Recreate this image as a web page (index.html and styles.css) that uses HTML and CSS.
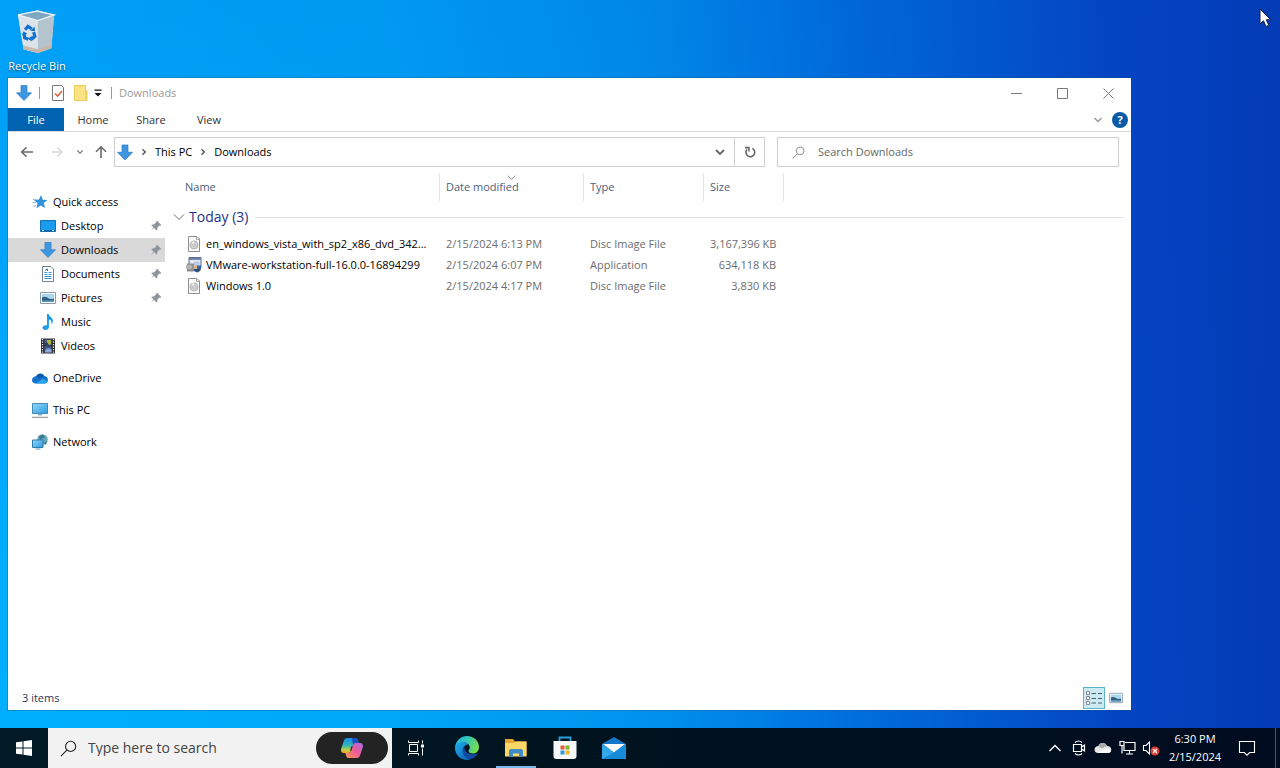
FILE: index.html
```
<!DOCTYPE html>
<html lang="en">
<head>
  <meta charset="UTF-8">
  <meta name="viewport" content="width=device-width, initial-scale=1.0">
  <title>Downloads</title>
  <link rel="stylesheet" href="styles.css">
</head>
<body>

  <!-- Shared icons -->
  <svg class="sprite" aria-hidden="true">
    <defs>
      <linearGradient id="screen" x1="0" y1="0" x2="1" y2="1">
        <stop offset="0" stop-color="#8fd9fa"/><stop offset="1" stop-color="#2f9be0"/>
      </linearGradient>
    </defs>
    <symbol id="i-down" viewBox="0 0 16 16">
      <path d="M5 .5h6v7.300h4.500L8 15.500.5 7.800H5z" fill="#3d97e0" stroke="#2a7cc4" stroke-width=".7"/>
    </symbol>
    <symbol id="i-pin" viewBox="0 0 12 12">
      <path d="M7 .7 11.300 5l-1 .8-.8-.2-2.300 2.300.1 1.800-.9.8L4 8.100.7 11.300 3.500 7.500 1.300 5.300l.9-.9 1.800.2 2.300-2.300-.2-.8z" fill="#8c959e"/>
    </symbol>
    <symbol id="i-chev" viewBox="0 0 10 10">
      <path d="M1.500 3 5 6.500 8.500 3" fill="none" stroke="currentColor" stroke-width="1.500"/>
    </symbol>
    <symbol id="i-chev-thin" viewBox="0 0 12 12">
      <path d="M1 3.500 6 8.500l5-5" fill="none" stroke="currentColor" stroke-width="1"/>
    </symbol>
    <symbol id="i-crumb" viewBox="0 0 8 10">
      <path d="M2.500 2.200 5.300 5 2.500 7.800" fill="none" stroke="currentColor" stroke-width="1.400"/>
    </symbol>
    <symbol id="i-search" viewBox="0 0 16 16">
      <circle cx="10" cy="6" r="4.800" fill="none" stroke="currentColor"/>
      <path d="M6.500 9.500.8 15.200" stroke="currentColor"/>
    </symbol>
    <symbol id="i-disc" viewBox="0 0 16 16">
      <path d="M2.500.5h8.500l2.500 2.500v12.500h-11z" fill="#fbfbfb" stroke="#8d8d8d"/>
      <path d="M10.500.5v3h3" fill="none" stroke="#a5a5a5"/>
      <circle cx="8" cy="9" r="4" fill="#d2d2d2" stroke="#a8a8a8" stroke-width=".8"/>
      <path d="M8 9 5.500 6.200A4 4 0 0 1 8 5.200z" fill="#f5f5f5"/>
      <circle cx="8" cy="9" r="1.200" fill="#fff" stroke="#999" stroke-width=".6"/>
    </symbol>
    <symbol id="i-picture" viewBox="0 0 16 14">
      <path d="M.5 1.500h15v11H.5z" fill="#fff" stroke="#8b9bab"/>
      <path d="M2 3h12v8H2z" fill="#a9d7f2"/>
      <path d="M2 6.500c3-1.500 5 0 7 1s3 .5 5 0V11H2z" fill="#33607f"/>
      <path d="M2 9.500h12V11H2z" fill="#5d9ac4"/>
    </symbol>
  </svg>

  <!-- Desktop -->
  <main class="desktop">
    <a class="desktop-icon" href="#">
      <svg width="40" height="48" viewBox="0 0 42 50">
        <path d="M1 5 22 0l17 5-3 35-14 5-15-4z" fill="#c9d4dc"/>
        <path d="M1 5l21 6v34L7 41z" fill="#dce4e9"/>
        <path d="M22 11l17-6-3 35-14 5z" fill="#b4c3ce"/>
        <path d="M1 5 21 1l18 4-17 6z" fill="#7fa7c2" stroke="#eef4f7" stroke-width="1.400"/>
        <path d="M6.500 37 22 41l14.300-5-.3 4-14 5-15-4z" fill="#c8b8aa"/>
        <g fill="none" stroke="#1273cf" stroke-width="3.400">
          <path d="M8.500 20.500 11.500 17l4 2.500"/>
          <path d="M17.500 23l1.200 4.500-3.500 3"/>
          <path d="M12 30.500l-4-1.500-.5-4.500"/>
        </g>
        <path d="M14 21.500l5 .5-.5-5zM15.500 27v6l-4-3zM5 26l2-4 4 3z" fill="#1273cf"/>
      </svg>
      <span>Recycle Bin</span>
    </a>

    <!-- Explorer window -->
    <section class="window">
      <header class="titlebar">
        <svg width="16" height="16"><use href="#i-down"/></svg>
        <span class="divider"></span>
        <button class="quick" aria-label="Properties">
          <svg width="14" height="16" viewBox="0 0 14 16"><path d="M1.500.5h9l2 2v13h-11z" fill="#fff" stroke="#777"/><path d="M4 8.500 6.500 11l4.500-5" fill="none" stroke="#d9603b" stroke-width="1.600"/></svg>
        </button>
        <button class="quick" aria-label="New folder">
          <svg width="14" height="16" viewBox="0 0 14 16"><path d="M.5.5h11v5h1.500v10H.5z" fill="#fbe283" stroke="#edcb5c"/><path d="M11 15.500v-10h2v10z" fill="#f2cf61"/></svg>
        </button>
        <button class="quick quick-more" aria-label="Customize Quick Access Toolbar">
          <svg width="8" height="8" viewBox="0 0 8 8"><path d="M.5.500h7v1.300h-7zM.5 4h7L4 7.500z" fill="#111"/></svg>
        </button>
        <span class="divider"></span>
        <h1>Downloads</h1>
        <div class="controls">
          <button aria-label="Minimize"><svg width="11" height="11" viewBox="0 0 11 11"><path d="M0 5.500h11" stroke="#777"/></svg></button>
          <button aria-label="Maximize"><svg width="11" height="11" viewBox="0 0 11 11"><path d="M.5.5h10v10H.5z" fill="none" stroke="#777"/></svg></button>
          <button aria-label="Close"><svg width="11" height="11" viewBox="0 0 11 11"><path d="M.5.5l10 10M10.500.5l-10 10" stroke="#777"/></svg></button>
        </div>
      </header>

      <nav class="tabs">
        <button class="file-tab">File</button>
        <button>Home</button>
        <button>Share</button>
        <button>View</button>
        <button class="ribbon-toggle" aria-label="Expand the Ribbon"><svg width="10" height="10"><use href="#i-chev"/></svg></button>
        <button class="help" aria-label="Help">?</button>
      </nav>

      <div class="toolbar">
        <div class="history">
          <button aria-label="Back"><svg width="14" height="14" viewBox="0 0 14 14"><path d="M13 7H2M6.500 2.200 1.700 7l4.800 4.800" fill="none" stroke="#6a6a6a" stroke-width="1.600"/></svg></button>
          <button aria-label="Forward"><svg width="14" height="14" viewBox="0 0 14 14"><path d="M2 7h10M7.500 2.500 12 7l-4.500 4.500" fill="none" stroke="#d5d5d5" stroke-width="1.400"/></svg></button>
          <button class="recent" aria-label="Recent locations"><svg width="8" height="8"><use href="#i-chev"/></svg></button>
          <button aria-label="Up"><svg width="14" height="14" viewBox="0 0 14 14"><path d="M7 13V2M2 6.700 7 1.800l5 4.900" fill="none" stroke="#6a6a6a" stroke-width="1.600"/></svg></button>
        </div>
        <div class="address">
          <svg width="16" height="17"><use href="#i-down"/></svg>
          <svg class="sep" width="8" height="10"><use href="#i-crumb"/></svg>
          <a href="#">This PC</a>
          <svg class="sep" width="8" height="10"><use href="#i-crumb"/></svg>
          <a href="#">Downloads</a>
          <button class="previous" aria-label="Previous locations"><svg width="12" height="12" viewBox="0 0 12 12"><path d="M2 4l4 4 4-4" fill="none" stroke="#666" stroke-width="1.800"/></svg></button>
          <button class="refresh" aria-label="Refresh"><svg width="12" height="12" viewBox="0 0 12 12"><path d="M8.300 2.400A4.400 4.400 0 1 1 3 3.500" fill="none" stroke="#666" stroke-width="1.600"/><path d="M1 .8h4.700v4.700H4.200V2.400H1z" fill="#666"/></svg></button>
        </div>
        <label class="search">
          <svg width="13" height="13"><use href="#i-search" /></svg>
          <input type="text" placeholder="Search Downloads" aria-label="Search Downloads">
        </label>
      </div>

      <div class="explorer">
        <nav class="tree">
          <a href="#">
            <svg width="16" height="16" viewBox="0 0 16 16"><path d="M9 1l1.800 4.700 4.700.2-3.700 3.200 1.300 5L8.700 11.500 4.500 14.200l1-4.900L2 6l4.900-.4z" fill="#2f93dd"/><path d="M1 5.500h3M.5 8.500h3.500M1 12h3" stroke="#7dbcec" stroke-width="1"/></svg>
            Quick access
          </a>
          <a href="#" class="child">
            <svg width="16" height="16" viewBox="0 0 16 16"><path d="M.5 2.500h15v11H.5z" fill="#1a9bf0" stroke="#1470b5"/><path d="M1 12.500h14" stroke="#0d5f9e"/><path d="M2 12.500h2M12 12.500h2" stroke="#cde9fb"/></svg>
            Desktop
            <svg class="pin" width="12" height="12"><use href="#i-pin"/></svg>
          </a>
          <a href="#" class="child selected">
            <svg width="16" height="16"><use href="#i-down"/></svg>
            Downloads
            <svg class="pin" width="12" height="12"><use href="#i-pin"/></svg>
          </a>
          <a href="#" class="child">
            <svg width="16" height="16" viewBox="0 0 16 16"><path d="M2.500.5h8.500l2.500 2.500v12.500h-11z" fill="#fff" stroke="#758493"/><path d="M4.500 6.500h3M4.500 8.500h3M4.500 10.500h7M4.500 12.500h7M8.500 6.500h3M8.500 8.500h3" stroke="#3f94cf"/><path d="M5 4.500 7.500 3M7.500 5V3" stroke="#2d76ad"/></svg>
            Documents
            <svg class="pin" width="12" height="12"><use href="#i-pin"/></svg>
          </a>
          <a href="#" class="child">
            <svg width="16" height="14"><use href="#i-picture"/></svg>
            Pictures
            <svg class="pin" width="12" height="12"><use href="#i-pin"/></svg>
          </a>
          <a href="#" class="child">
            <svg width="16" height="16" viewBox="0 0 16 16"><path d="M7 0h1.700c.3 2.600 4.300 3.400 4.200 7 0 1.500-.7 2.800-1.400 3.500.5-3-.8-4.500-2.600-5V13c0 1.800-1.600 3-3.400 3S2.500 15 2.500 13.600c0-1.700 2.200-2.900 4.500-2.300z" fill="#1e9be3"/></svg>
            Music
          </a>
          <a href="#" class="child">
            <svg width="16" height="16" viewBox="0 0 16 16"><path d="M1 .5h14v15H1z" fill="#2b2b2b"/><path d="M2.500 1v14M13.500 1v14" stroke="#eee" stroke-width="1.300" stroke-dasharray="1.300 1.200"/><path d="M4.500 1.500h7v6h-7zM4.500 8.500h7v6h-7z" fill="#46609e"/><path d="M7 2h4v4l-2 1-2-2z" fill="#a8b83c"/><path d="M4.500 5.500 7 4l2 3.500H4.500z" fill="#304254"/><path d="M5 13c2-3 4-3 6.500-1.500v3H5z" fill="#8aa7dc"/></svg>
            Videos
          </a>
          <a href="#" class="root">
            <svg width="16" height="16" viewBox="0 0 16 16"><path d="M4 6.200A4.500 4.500 0 0 1 12 6c2.300 0 3.900 1.700 3.900 3.800S14.500 13.500 12.500 13.500H3.700C1.500 13.500 0 12 0 10s1.800-3.800 4-3.800z" fill="#1673c9"/><path d="M4.500 6C5.500 3 10.500 2.500 12 6L7 9z" fill="#0b5cb0"/><path d="M3.500 13.500 11 8.800l4.500 2.700c-.6 1.200-1.800 2-3 2z" fill="#2ba7ed"/></svg>
            OneDrive
          </a>
          <a href="#" class="root">
            <svg width="16" height="16" viewBox="0 0 16 16"><path d="M.5 1.500h15v10H.5z" fill="url(#screen)" stroke="#4488b4"/><path d="M6 12h4v1.500H6z" fill="#7eb3d4"/><path d="M0 15.300h16" stroke="#8b8791"/></svg>
            This PC
          </a>
          <a href="#" class="root">
            <svg width="16" height="16" viewBox="0 0 16 16"><circle cx="10.500" cy="5.500" r="5.300" fill="#65a9bd"/><path d="M7 2l4-1.500 2 3-3 1-2 3zM12 9l3-2-1 4z" fill="#397b92"/><path d="M.5 6h10.500v7.500H.5z" fill="url(#screen)" stroke="#317ba9"/><path d="M3.500 15h5" stroke="#6d9fbd"/></svg>
            Network
          </a>
        </nav>

        <div class="files">
          <table>
            <colgroup>
              <col class="col-name"><col class="col-date"><col class="col-type"><col class="col-size"><col>
            </colgroup>
            <thead>
              <tr>
                <th>Name</th>
                <th>Date modified<svg class="sort" width="9" height="9"><use href="#i-chev-thin"/></svg></th>
                <th>Type</th>
                <th>Size</th>
                <td></td>
              </tr>
            </thead>
            <tbody>
              <tr class="group">
                <td colspan="5"><div><svg width="12" height="12"><use href="#i-chev-thin"/></svg><span>Today (3)</span></div></td>
              </tr>
              <tr>
                <td><div class="file"><svg width="16" height="16"><use href="#i-disc"/></svg><span>en_windows_vista_with_sp2_x86_dvd_342...</span></div></td>
                <td>2/15/2024 6:13 PM</td>
                <td>Disc Image File</td>
                <td>3,167,396 KB</td>
                <td></td>
              </tr>
              <tr>
                <td><div class="file"><svg width="16" height="16" viewBox="0 0 16 16"><path d="M3 .5h12v10H3z" fill="#e4e9f2" stroke="#5c6b86"/><path d="M3 1h12v2H3z" fill="#6f83ab"/><path d="M8 4.500h5.500v5H8z" fill="#b9c9e3"/><path d="M1 6.500h7v8H1z" fill="#8f8f8f"/><circle cx="3.500" cy="10" r="3" fill="#b7b7b7" stroke="#777" stroke-width=".6"/><path d="M7.500 8.500h3.500V12H7.500z" fill="#d9b482"/><path d="M11 8.500h4V12h-4z" fill="#3466aa"/><path d="M7.500 12H11v3.500L8 14z" fill="#2b4f8d"/><path d="M11 12h4c-.5 2-2 3-4 3.500z" fill="#394a63"/></svg><span>VMware-workstation-full-16.0.0-16894299</span></div></td>
                <td>2/15/2024 6:07 PM</td>
                <td>Application</td>
                <td>634,118 KB</td>
                <td></td>
              </tr>
              <tr>
                <td><div class="file"><svg width="16" height="16"><use href="#i-disc"/></svg><span>Windows 1.0</span></div></td>
                <td>2/15/2024 4:17 PM</td>
                <td>Disc Image File</td>
                <td>3,830 KB</td>
                <td></td>
              </tr>
            </tbody>
          </table>
        </div>
      </div>

      <footer class="status">
        <span>3 items</span>
        <button class="active" aria-label="Details view">
          <svg width="16" height="14" viewBox="0 0 16 14"><path d="M.5.5h3v3h-3zM.5 5.500h3v3h-3zM.5 10.500h3v3h-3z" fill="#fff" stroke="#8d8494"/><path d="M5.500 2.500H10M12 2.500h4M5.500 7.500H10M12 7.500h4M5.500 12H10M12 12h4" stroke="#44616e"/></svg>
        </button>
        <button aria-label="Large icons view"><svg width="14" height="12"><use href="#i-picture"/></svg></button>
      </footer>
    </section>

    <svg class="cursor" width="14" height="20" viewBox="0 0 14 20"><path d="M2 1v15l3.500-3.200L8 18.500l2.800-1.200-2.500-5.500h4.500z" fill="#fff" stroke="#10204a"/></svg>
  </main>

  <!-- Taskbar -->
  <footer class="taskbar">
    <button class="start" aria-label="Start">
      <svg width="16" height="16" viewBox="0 0 16 16"><path d="M0 2.300 6.500 1.400v6.100H0zM7.500 1.200 16 0v7.500H7.500zM0 8.500h6.500v6.100L0 13.700zM7.500 8.500H16V16l-8.500-1.200z" fill="#fff"/></svg>
    </button>
    <div class="task-search">
      <label>
        <svg width="17" height="17"><use href="#i-search"/></svg>
        <input type="text" placeholder="Type here to search" aria-label="Type here to search">
      </label>
      <button class="copilot" aria-label="Copilot">
        <svg width="24" height="22" viewBox="0 0 24 22">
          <defs>
            <linearGradient id="cpA" x1="0" y1="0" x2="0" y2="1"><stop offset="0" stop-color="#168de8"/><stop offset=".5" stop-color="#35b6b5"/><stop offset=".8" stop-color="#c2cf3c"/><stop offset="1" stop-color="#f2a633"/></linearGradient>
            <linearGradient id="cpB" x1="1" y1="0" x2="0" y2="1"><stop offset="0" stop-color="#a66be6"/><stop offset=".5" stop-color="#ee5c94"/><stop offset="1" stop-color="#ff9951"/></linearGradient>
          </defs>
          <path d="M7 1h8.500c1.500 0 2 1 2.500 2.500l.7 2.500h-3c-1.500 0-2.300.8-2.700 2l-2 6c-.5 1.300-1.300 2-2.500 2H4c-2.500 0-3.500-2-2.800-4.500L3.800 4C4.400 2.200 5.500 1 7 1z" fill="url(#cpA)"/>
          <path d="M12 1h3.500c1.500 0 2 1 2.500 2.500l.7 2.500h-3c-1.500 0-2.300.8-2.700 2z" fill="#1b50c5"/>
          <path d="M17 21H8.500C7 21 6.500 20 6 18.500L5.300 16h3c1.500 0 2.300-.8 2.700-2l2-6c.5-1.300 1.300-2 2.500-2H20c2.500 0 3.500 2 2.800 4.500L20.200 18c-.6 1.800-1.700 3-3.200 3z" fill="url(#cpB)"/>
          <path d="M11.300 9.500h1.200l-1.300 4.200H10z" fill="#232323"/>
        </svg>
      </button>
    </div>
    <button class="task-view" aria-label="Task View">
      <svg width="18" height="16" viewBox="0 0 18 16"><path d="M2.500 4.500h8v7h-8zM1.500.5v2h10v-2M1.500 15.500v-2h10v2M15.500.5v3M15.500 8.500v7" fill="none" stroke="#fff"/><path d="M14 4.500h3v3h-3z" fill="#fff"/></svg>
    </button>
    <div class="apps">
      <button aria-label="Microsoft Edge">
        <svg width="24" height="24" viewBox="0 0 24 24">
          <defs>
            <linearGradient id="edA" x1="0" y1="0" x2="1" y2=".3"><stop offset="0" stop-color="#29b3e8"/><stop offset=".5" stop-color="#32c6b9"/><stop offset="1" stop-color="#73db55"/></linearGradient>
            <linearGradient id="edB" x1="0" y1="0" x2="1" y2="1"><stop offset="0" stop-color="#1db1ec"/><stop offset="1" stop-color="#0a5ab1"/></linearGradient>
          </defs>
          <path d="M0 11C1 4.500 6 0 12 0c7 0 12 5 12 11 0 4-2.500 6.500-6 6.500-3 0-4.500-1.200-4.500-2.400 0-.9 1.300-1.400 1.300-3.600C14.800 8.500 12 6.500 8.500 6.500 4.500 6.500 1.500 8.500 0 11z" fill="url(#edA)"/>
          <path d="M0 12c0-3.500 4-6 8-6 2.500 0 4.500 1 5.500 2.500-3.500 0-5.500 2.700-5.500 6 0 4.500 4 7.700 8 8.500-1.200.7-2.700 1-4 1C5.400 24 0 18.800 0 12z" fill="url(#edB)"/>
          <path d="M9.300 10.500C7 12.500 7.200 16 8.500 18.500c2 3.700 6 5 8.500 4.200 2.500-1 4.500-3 5.500-4.700.3-.6 0-.8-.6-.6-3.900 1.800-8.500.6-10.900-1.900-1.300-1.400-1.900-3.300-1.700-5z" fill="#1249a0"/>
        </svg>
      </button>
      <button class="running" aria-label="File Explorer">
        <svg width="22" height="18" viewBox="0 0 22 18"><path d="M0 0h8l2 2.500h11.500V17H0z" fill="#e5a52e"/><path d="M0 4h8.500l2-1.500h11V17.500H0z" fill="#ffd767"/><path d="M4 18v-6.500L5.500 10h11l1.500 1.500V18h-4v-3.500H8V18z" fill="#3f8bc8"/></svg>
      </button>
      <button aria-label="Microsoft Store">
        <svg width="24" height="24" viewBox="0 0 24 24"><path d="M6.500 6V1.500h11V6" fill="none" stroke="#29a2dc" stroke-width="1.800"/><path d="M.5 5h23v15c0 2-1 3-3 3h-17c-2 0-3-1-3-3z" fill="#f5f7f8"/><path d="M7.500 9.500h4v4h-4z" fill="#ef5931"/><path d="M12.500 9.500h4v4h-4z" fill="#80b829"/><path d="M7.500 14.500h4v4h-4z" fill="#2a9be0"/><path d="M12.500 14.500h4v4h-4z" fill="#f5b526"/></svg>
      </button>
      <button aria-label="Mail">
        <svg width="24" height="22" viewBox="0 0 24 22"><path d="M0 7 12 0l12 7v15H0z" fill="#1476c7"/><path d="M1 7h22L12 15.500z" fill="#fff"/><path d="M0 7l12 8.500L24 7v15H0z" fill="#33a9e9"/><path d="M0 22l12-6.500L24 7v15z" fill="#168bd9"/></svg>
      </button>
    </div>
    <div class="tray">
      <button aria-label="Show hidden icons"><svg width="14" height="14" viewBox="0 0 14 14"><path d="M1.500 10 7 4.500l5.500 5.500" fill="none" stroke="#fff" stroke-width="1.300"/></svg></button>
      <button aria-label="Meet Now"><svg width="14" height="16" viewBox="0 0 14 16"><path d="M1.500 4.500h8v7h-8zM9.500 7 12.500 5v6L9.500 9M3 2.500Q6.500-.5 10 2.500M3 13.500q3.500 3 7 0" fill="none" stroke="#fff" stroke-width="1.200"/></svg></button>
      <button aria-label="OneDrive"><svg width="18" height="14" viewBox="0 0 18 14"><path d="M4.500 5C5.500 1 11.500 1 13 5c2.700 0 4.300 1.600 4.300 3.800S15.500 12 14 12H4C2 12 .5 10.500.5 8.500S2.500 5 4.500 5z" fill="#e8e8e8"/><path d="M4.500 5C5.500 1 11.500 1 13 5L7.500 7.500z" fill="#acacac"/><path d="M4 12l8-5 5 3c-.6 1.300-1.600 2-3 2z" fill="#fff"/></svg></button>
      <button aria-label="Network"><svg width="17" height="16" viewBox="0 0 17 16"><path d="M6 2.500h10v8H5V6M10.500 10.500v3M7 14h7M1 1.500h4v4H1zM3 5.500v8" fill="none" stroke="#fff" stroke-width="1.200"/></svg></button>
      <button aria-label="Volume"><svg width="18" height="16" viewBox="0 0 18 16"><path d="M1.500 5.500H4L7.500 2v12L4 10.500H1.500z" fill="none" stroke="#fff" stroke-width="1.100"/><circle cx="13" cy="11" r="4.500" fill="#dc3c35"/><path d="M11 9l4 4M15 9l-4 4" stroke="#fff" stroke-width="1.200"/></svg></button>
      <button class="clock"><span>6:30 PM</span><span>2/15/2024</span></button>
      <button class="notifications" aria-label="Notifications"><svg width="18" height="18" viewBox="0 0 18 18"><path d="M1.500 2.500h15v11h-4.800L9 16.200l-2.700-2.700H1.500z" fill="none" stroke="#fff" stroke-width="1.100"/></svg></button>
      <button class="show-desktop" aria-label="Show desktop"></button>
    </div>
  </footer>

</body>
</html>
```

FILE: styles.css
```
* {
  box-sizing: border-box;
}

/* General Page Styling */
body {
  display: flex;
  flex-direction: column;
  min-height: 100vh;
  margin: 0;
  font-family: "Open Sans", "Noto Sans", sans-serif;
  font-size: 11px;
  line-height: 16px;
  color: #000;
  background:
    linear-gradient(to top, rgba(0, 60, 190, 0), rgba(0, 60, 190, 0.14)),
    linear-gradient(90deg, #00b0ff 0%, #00aafa 28%, #0094ee 50%, #006cdc 68%, #0444c2 88%, #033cb4 100%);
}

button,
input {
  padding: 0;
  border: none;
  background: none;
  font: inherit;
  color: inherit;
}

button {
  display: flex;
  align-items: center;
  justify-content: center;
}

a {
  color: inherit;
  text-decoration: none;
}

svg {
  flex: none;
  display: block;
}

.sprite {
  position: absolute;
  width: 0;
  height: 0;
}

/* Desktop */
.desktop {
  position: relative;
  flex: 1;
}

.desktop-icon {
  display: flex;
  flex-direction: column;
  align-items: center;
  width: 74px;
  padding-top: 10px;
  color: #fff;
  text-shadow: 0 1px 2px rgba(0, 0, 0, 0.6);
  white-space: nowrap;
}

.cursor {
  position: absolute;
  top: 8px;
  right: 8px;
}

/* Explorer Window */
.window {
  position: absolute;
  top: 78px;
  right: 149px;
  bottom: 18px;
  left: 8px;
  display: flex;
  flex-direction: column;
  background: #fff;
  box-shadow: 0 0 0 1px rgba(20, 80, 130, 0.35);
}

.titlebar {
  display: flex;
  align-items: center;
  height: 30px;
  padding-left: 8px;
}

.titlebar h1 {
  margin: 0 0 0 7px;
  font-size: 11px;
  font-weight: normal;
  color: #999;
}

.divider {
  width: 1px;
  height: 12px;
  margin-left: 7px;
  background: #999;
}

.quick {
  width: 23px;
}

.divider + .quick {
  margin-left: 6px;
}

.quick-more {
  width: 12px;
}

.controls {
  display: flex;
  align-self: stretch;
  margin-left: auto;
}

.controls button {
  width: 46px;
}

/* Ribbon Tabs */
.tabs {
  display: flex;
  height: 24px;
  border-bottom: 1px solid #dadbdc;
}

.tabs button {
  width: 58px;
  color: #333;
}

.tabs .file-tab {
  width: 56px;
  background: #0063b1;
  color: #fff;
}

.tabs .ribbon-toggle {
  width: 24px;
  margin-left: auto;
  color: #999;
}

.tabs .help {
  align-self: center;
  width: 16px;
  height: 16px;
  margin: 0 3px 0 2px;
  border-radius: 50%;
  background: #0a5ba6;
  color: #fff;
  font-weight: bold;
}

/* Address Bar */
.toolbar {
  display: flex;
  padding: 5px 12px 6px 8px;
}

.history {
  display: flex;
  gap: 8px;
  width: 98px;
  padding-left: 4px;
  color: #777;
}

.history .recent {
  width: 8px;
  margin-right: 2px;
}

.history button:nth-child(2) {
  margin: 0 4px 0 8px;
}

.address,
.search {
  display: flex;
  align-items: center;
  height: 30px;
  border: 1px solid #d0d0d0;
}

.address {
  flex: 1;
  gap: 7px;
  padding-left: 2px;
}

.address .sep {
  color: #555;
}

.address .previous {
  align-self: stretch;
  width: 28px;
  margin-left: auto;
}

.address .refresh {
  align-self: stretch;
  width: 30px;
  margin-left: -7px;
  border-left: 1px solid #d0d0d0;
}

.search {
  gap: 13px;
  width: 342px;
  margin-left: 12px;
  padding-left: 14px;
  color: #777;
}

.search input {
  flex: 1;
  outline: none;
}

.search input::placeholder {
  color: #666;
}

/* Navigation Pane */
.explorer {
  display: flex;
  flex: 1;
}

.tree {
  width: 157px;
  padding-top: 17px;
}

.tree a {
  display: flex;
  align-items: center;
  gap: 5px;
  height: 24px;
  padding: 0 3px 0 24px;
}

.tree .child {
  padding-left: 32px;
}

.tree .selected {
  background: #d9d9d9;
}

.tree .root {
  margin-top: 8px;
}

.tree .pin {
  margin-left: auto;
}

/* File List */
.files {
  flex: 1;
  padding-right: 7px;
}

table {
  width: 100%;
  table-layout: fixed;
  border-spacing: 0;
}

.col-name {
  width: 275px;
}

.col-date {
  width: 144px;
}

.col-type {
  width: 120px;
}

.col-size {
  width: 80px;
}

th {
  position: relative;
  height: 28px;
  padding: 0 6px;
  border-right: 1px solid #e3e3e3;
  font-weight: normal;
  text-align: left;
  color: #4c607a;
}

th:first-child {
  padding-left: 20px;
}

.sort {
  position: absolute;
  top: 0;
  left: 67px;
  color: #666;
}

tbody td {
  height: 21px;
  padding: 0 6px;
  color: #6d6d6d;
  white-space: nowrap;
}

tbody td:nth-child(4) {
  padding-right: 8px;
  text-align: right;
}

.file {
  display: flex;
  align-items: center;
  gap: 4px;
  padding-left: 15px;
  color: #000;
}

.group td {
  height: 32px;
  padding: 0 0 0 8px;
}

.group div {
  display: flex;
  align-items: center;
  gap: 4px;
}

.group div::after {
  content: "";
  flex: 1;
  height: 1px;
  margin-left: 3px;
  background: #e2e2e2;
}

.group span {
  font-size: 14px;
  color: #1e3287;
}

/* Status Bar */
.status {
  display: flex;
  align-items: center;
  height: 24px;
  padding: 0 4px 0 14px;
  color: #1e395b;
}

.status button {
  width: 22px;
  height: 22px;
}

.status .active {
  margin-left: auto;
  border: 1px solid #5fb4c4;
  background: #cbeaf2;
}

/* Taskbar */
.taskbar {
  display: flex;
  height: 40px;
  color: #fff;
  background: linear-gradient(90deg, #001b26, #00131f 50%, #000c20);
}

.start,
.task-view {
  width: 48px;
}

.task-search {
  display: flex;
  align-items: center;
  width: 344px;
  padding: 0 4px 0 12px;
  background: #f2f2f2;
  color: #222;
}

.task-search label {
  display: flex;
  flex: 1;
  align-items: center;
  gap: 11px;
}

.task-search input {
  flex: 1;
  min-width: 0;
  outline: none;
  font-size: 14px;
}

.task-search input::placeholder {
  color: #444;
}

.copilot {
  width: 72px;
  height: 32px;
  border-radius: 16px;
  background: #232323;
}

.apps {
  display: flex;
  gap: 9px;
  padding-left: 7px;
}

.apps button {
  width: 40px;
}

.apps .running {
  border-bottom: 2px solid #76b9ed;
  padding-top: 2px;
}

.tray {
  display: flex;
  margin-left: auto;
}

.tray button {
  width: 24px;
}

.tray .clock {
  flex-direction: column;
  width: 64px;
  line-height: 18px;
}

.tray .notifications {
  width: 40px;
}

.tray .show-desktop {
  width: 5px;
  margin-left: 8px;
  border-left: 1px solid #4b5566;
}
```
